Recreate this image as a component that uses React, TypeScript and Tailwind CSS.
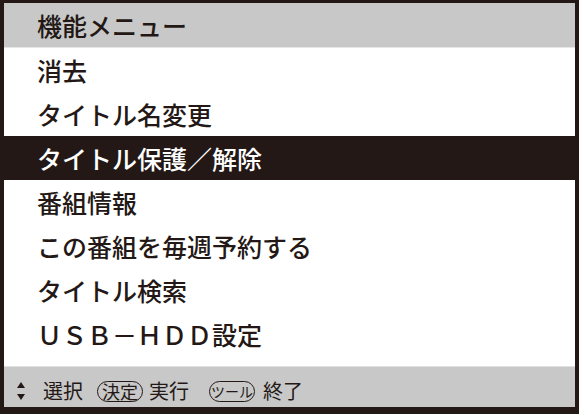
import React from "react";

const items = [
  "消去",
  "タイトル名変更",
  "タイトル保護／解除",
  "番組情報",
  "この番組を毎週予約する",
  "タイトル検索",
  "ＵＳＢ－ＨＤＤ設定",
];

export default function App() {
  return (
    <div
      className="w-[579px] h-[414px] bg-[#231815] pt-[3px] pl-[4px] pr-[4px] pb-[7px] flex flex-col text-[#231815]"
      style={{ fontFamily: '"Noto Sans CJK JP", "Noto Sans", sans-serif' }}
    >
      <div className="h-[44px] shrink-0 bg-[#c8c8c8] flex items-center pl-[33px] text-[25px] font-medium leading-none">
        機能メニュー
      </div>
      <div className="h-[1px] shrink-0 bg-[#e6e6e6]" />
      <div className="flex-1 bg-white flex flex-col">
        {items.map((t, i) =>
          i === 2 ? (
            <div
              key={t}
              className="h-[44px] shrink-0 -ml-[4px] -mr-[4px] pl-[37px] bg-[#231815] text-white flex items-center text-[25px] font-medium leading-none"
            >
              {t}
            </div>
          ) : (
            <div
              key={t}
              className="h-[44px] shrink-0 pl-[33px] flex items-center text-[25px] font-medium leading-none"
            >
              {t}
            </div>
          )
        )}
      </div>
      <div className="h-[41px] shrink-0 bg-[#c8c8c8] border-t border-[#e0e0e0] flex items-center pt-[8px] text-[20px] leading-none">
        <svg className="ml-[13px]" width="8" height="18" viewBox="0 0 8 18">
          <polygon points="4,0 8,6 0,6" fill="#231815" />
          <polygon points="0,12 8,12 4,18" fill="#231815" />
        </svg>
        <span className="ml-[18px]">選択</span>
        <span className="ml-[14px] h-[21px] px-[4px] rounded-full border-[1.5px] border-[#231815] flex items-center text-[18px] leading-none">
          決定
        </span>
        <span className="ml-[6px]">実行</span>
        <span className="ml-[20px] h-[21px] px-[1px] rounded-full border-[1.5px] border-[#231815] flex items-center text-[14px] leading-none">
          ツール
        </span>
        <span className="ml-[8px]">終了</span>
      </div>
    </div>
  );
}
